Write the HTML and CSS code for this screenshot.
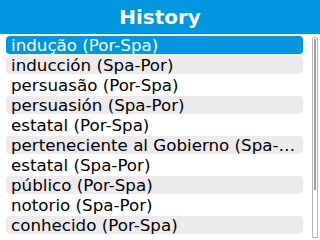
FILE: index.html
```html
<!DOCTYPE html>
<html>
<head>
<meta charset="utf-8">
<link rel="stylesheet" href="styles.css">
</head>
<body>
<div class="screen">
  <header class="title">History</header>
  <div class="content">
    <ul class="list">
      <li class="row selected">indução (Por-Spa)</li>
      <li class="row alt">inducción (Spa-Por)</li>
      <li class="row">persuasão (Por-Spa)</li>
      <li class="row alt">persuasión (Spa-Por)</li>
      <li class="row">estatal (Por-Spa)</li>
      <li class="row alt">perteneciente al Gobierno (Spa-Por)</li>
      <li class="row">estatal (Spa-Por)</li>
      <li class="row alt">público (Por-Spa)</li>
      <li class="row">notorio (Spa-Por)</li>
      <li class="row alt">conhecido (Por-Spa)</li>
    </ul>
    <div class="scrollbar"><div class="thumb"></div></div>
  </div>
</div>
</body>
</html>
```
FILE: styles.css
```css
html, body {
  margin: 0;
  padding: 0;
  background: #ffffff;
}
.screen {
  width: 320px;
  height: 240px;
  overflow: hidden;
  font-family: "DejaVu Sans", Verdana, sans-serif;
}
.title {
  height: 34px;
  background: #0096e0;
  color: #ffffff;
  font-weight: bold;
  font-size: 20px;
  line-height: 34px;
  text-align: center;
}
.content {
  display: flex;
  padding: 2px 2px 0 6px;
  gap: 9px;
}
.list {
  list-style: none;
  margin: 0;
  padding: 0;
  width: 297px;
  display: flex;
  flex-direction: column;
  gap: 2px;
}
.row {
  height: 18px;
  line-height: 18px;
  font-size: 16.7px;
  color: #000000;
  padding: 0 2px 0 5px;
  border-radius: 4px;
  white-space: nowrap;
  overflow: hidden;
  text-overflow: ellipsis;
}
.alt {
  background: #edeaed;
}
.selected {
  background: #0096e0;
  color: #ffffff;
}
.scrollbar {
  margin-top: 1px;
  width: 4px;
  height: 198px;
  border: 1px solid #b4b4b4;
  border-radius: 2px 2px 0 0;
  padding: 1px 0 0 1px;
  box-sizing: content-box;
}
.thumb {
  width: 2px;
  height: 151px;
  background: #a0a0a0;
}
```
